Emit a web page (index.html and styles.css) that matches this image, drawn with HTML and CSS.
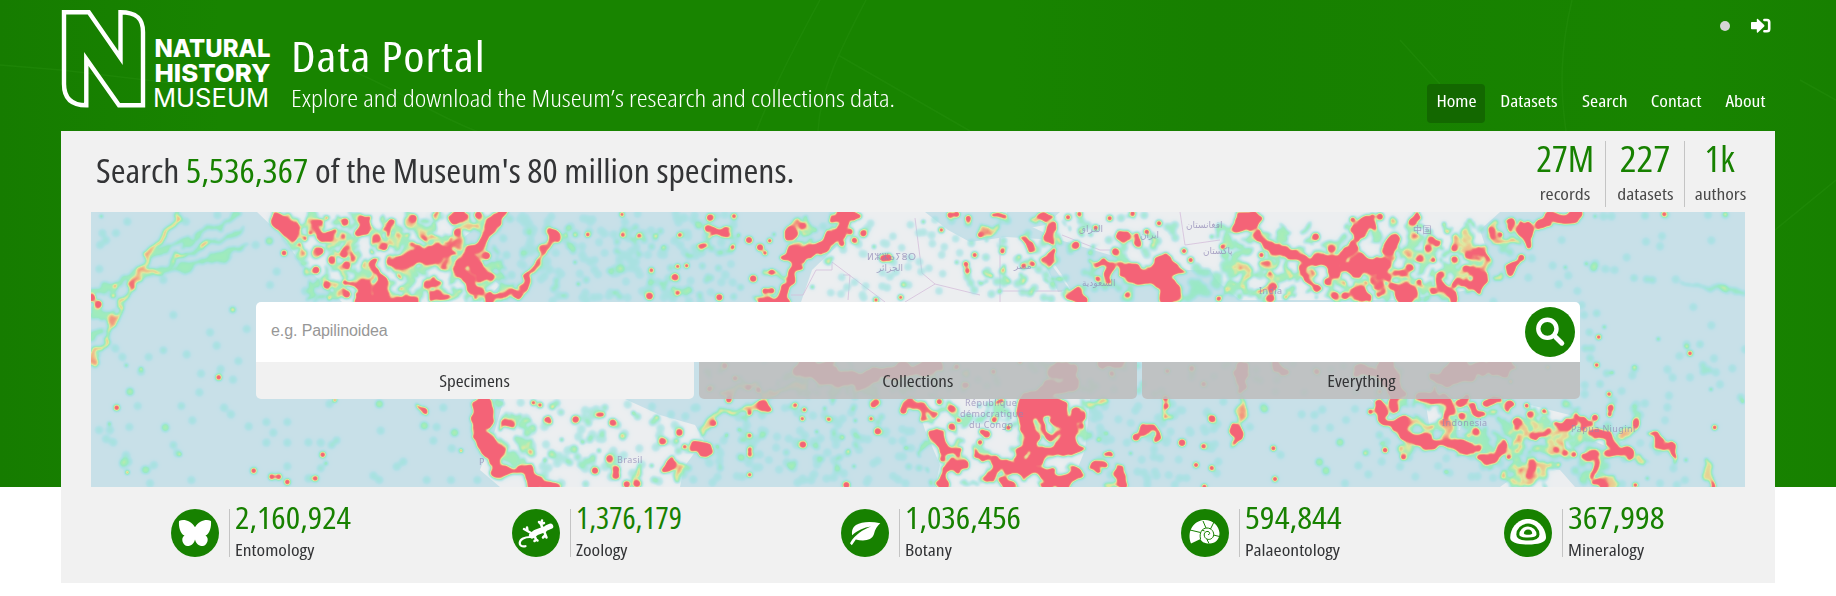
FILE: index.html
```html
<!DOCTYPE html>
<html lang="en">
<head>
<meta charset="utf-8">
<title>Data Portal | Natural History Museum</title>
<link rel="stylesheet" href="styles.css">
</head>
<body>
<div class="page">
  <svg class="leaf" viewBox="0 0 1836 487" preserveAspectRatio="none" aria-hidden="true">
    <path d="M820 0C790 55 750 130 735 200M866 0C840 50 820 90 818 131M838 55L970 131M0 65L61 70L180 84M350 70C400 90 440 120 500 140M1572 0C1560 50 1560 90 1566 131M1400 40L1440 84M1800 80L1836 100M1775 230L1836 180"/>
  </svg>
  <div class="wrap">
    <header class="header">
      <svg class="logo" viewBox="61 8 212 101" role="img" aria-label="Natural History Museum">
        <path class="logo-n" d="M64 12.2H88.8L120.5 58V12.2C136 12.2 143 18 143 32V105.3H119L86.3 59V105.3C71 105.3 64 98 64 84Z"/>
        <g class="logo-text">
          <text x="154.500" y="57.4" textLength="116" lengthAdjust="spacingAndGlyphs">NATURAL</text>
          <text x="154.500" y="82.2" textLength="116" lengthAdjust="spacingAndGlyphs">HISTORY</text>
          <text class="thin" x="153" y="107" textLength="116" lengthAdjust="spacingAndGlyphs">MUSEUM</text>
        </g>
      </svg>
      <div class="titles">
        <h1><span class="fit title">Data Portal</span></h1>
        <p><span class="fit subtitle">Explore and download the Museum’s research and collections data.</span></p>
      </div>
      <div class="header-right">
        <div class="account">
          <i class="status"></i>
          <svg class="signin" viewBox="0 0 20 16"><path fill="#fff" d="M0 4.8Q0 4.1 .8 4.1H5.8V1.5Q5.9.3 6.9.9L13.2 7Q13.8 7.8 13.2 8.5L6.9 14.6Q5.9 15.2 5.8 14V11.3H.8Q0 11.3 0 10.6Z"/><path fill="none" stroke="#fff" stroke-width="2.6" stroke-linecap="round" d="M13.4 2H16Q18.2 2 18.2 4.2V11Q18.2 13.3 16 13.3H13.4"/></svg>
        </div>
        <nav class="nav">
          <a class="on"><span class="fit">Home</span></a>
          <a><span class="fit">Datasets</span></a>
          <a><span class="fit">Search</span></a>
          <a><span class="fit">Contact</span></a>
          <a><span class="fit">About</span></a>
        </nav>
      </div>
    </header>
    <main class="card">
      <section class="top">
        <h2><span class="fit hero">Search <b>5,536,367</b> of the Museum's 80 million specimens.</span></h2>
        <div class="stats">
          <div><strong><span class="fit">27M</span></strong><span class="fit">records</span></div>
          <div><strong><span class="fit wide">227</span></strong><span class="fit">datasets</span></div>
          <div><strong><span class="fit">1k</span></strong><span class="fit">authors</span></div>
        </div>
      </section>
      <section class="map">
        <svg class="mapart" viewBox="91 212 1654 275" aria-hidden="true">
          <defs>
            <filter id="coast" filterUnits="userSpaceOnUse" x="70" y="190" width="1700" height="320">
              <feTurbulence type="fractalNoise" baseFrequency=".07" numOctaves="2" seed="7" result="noise"/>
              <feDisplacementMap in="SourceGraphic" in2="noise" scale="17" xChannelSelector="R" yChannelSelector="G"/>
            </filter>
            <filter id="heat" filterUnits="userSpaceOnUse" x="70" y="190" width="1700" height="320" color-interpolation-filters="sRGB">
              <feGaussianBlur in="SourceGraphic" stdDeviation="1.5" result="near"/>
              <feGaussianBlur in="SourceGraphic" stdDeviation="3.6" result="wide"/>
              <feComponentTransfer in="wide" result="halo"><feFuncA type="linear" slope=".5"/></feComponentTransfer>
              <feComposite in="near" in2="halo" operator="over"/>
              <feColorMatrix values="0 0 0 1 0  0 0 0 1 0  0 0 0 1 0  0 0 0 1 0"/>
              <feComponentTransfer>
                <feFuncR type="table" tableValues=".60 .60 .61 .61 .57 .62 .88 .94 .95 .96 .96"/>
                <feFuncG type="table" tableValues=".87 .87 .88 .89 .92 .93 .91 .74 .48 .39 .39"/>
                <feFuncB type="table" tableValues=".90 .90 .90 .87 .75 .70 .62 .54 .47 .47 .47"/>
                <feFuncA type="table" tableValues="0 .12 .45 .7 .85 .9 .97 1 1 1 1"/>
              </feComponentTransfer>
            </filter>
          </defs>
          <rect x="91" y="212" width="1654" height="275" fill="#c8e0e8"/>
          <g class="land">
            <path d="M257 212L282 236L300 262L330 290L345 305H480L500 285L480 270L450 250L478 225L500 212Z"/>
            <path d="M504 399L495 430L480 470L500 487H680L684 467L704 440L695 425L660 415L625 399Z"/>
            <path d="M858 212L838 245L812 270L800 305H1080L1062 275L1048 255L1056 240L1006 237L970 242L948 230L925 212Z"/>
            <path d="M915 399L925 430L940 465L935 487H1070L1085 450L1090 399Z"/>
            <path d="M1000 212L1060 240L1110 255L1150 270H1210L1230 300H1400L1470 290L1490 260L1480 230L1500 212Z"/>
            <path d="M1425 399H1465L1460 430H1430ZM1530 405L1570 415L1625 440L1610 448L1580 435L1572 450L1540 425ZM1500 487L1530 465L1560 470L1575 487ZM1370 399L1400 425L1395 432Z"/>
          </g>
          <path class="sea" d="M1007 212H1060L1045 225L1008 232ZM1048 260L1070 290L1058 292L1046 266ZM1180 276L1206 272L1240 300H1175Z"/>
          <path class="border" d="M832 262V270H816L803 295L791 295M832 262L885 302M843 275H850L848 300M905 302L935 284L922 273L915 218M935 284L980 295M1000 238V302M1000 291H1062M1062 235L1100 250H1115M1180 212L1185 245L1220 240"/>
          <g filter="url(#heat)"><g id="spots"></g><g id="bands" filter="url(#coast)"></g></g>
          <g class="names">
            <text x="867" y="260">ⵍⵣⵣⴰⵢⴻⵔ</text><text x="877" y="271">الجزائر</text>
            <text x="1014" y="269">مصر</text>
            <text x="1079" y="232">العراق</text><text x="1140" y="238">ايران</text>
            <text x="1186" y="228">افغانستان</text><text x="1203" y="254">پاکستان</text>
            <text x="1082" y="286">السعودية</text><text x="1259" y="294">India</text>
            <text x="1413" y="233">中国</text><text x="617" y="463">Brasil</text>
            <text x="965" y="406">République</text><text x="960" y="417">démocratique</text><text x="969" y="428">du Congo</text>
            <text x="1442" y="426">Indonesia</text><text x="1571" y="432">Papua Niugini</text><text x="479" y="465">P</text>
          </g>
        </svg>
        <form class="search">
          <div class="field">
            <span class="hint">e.g. Papilinoidea</span>
            <span class="go"><svg viewBox="0 0 50 50"><circle cx="22.4" cy="21.8" r="9.1"/><path d="M29 28.5L31 30.5" stroke-width="4"/><path d="M31 30.5L36.8 36.2" stroke-width="5"/></svg></span>
          </div>
          <div class="tabs">
            <div class="active"><span class="fit">Specimens</span></div>
            <div><span class="fit">Collections</span></div>
            <div><span class="fit">Everything</span></div>
          </div>
        </form>
      </section>
      <section class="counts">
        <div class="count ento">
          <svg viewBox="0 0 48 48"><circle cx="24" cy="24" r="24"/><path fill="#fff" d="M24 18.2C20 12 13 9.5 8 12C7.500 17 9 25 13.500 26.500C9 29 12 37 16.500 37C20.500 37 23 34.500 24 30.500C25 34.500 27.500 37 31.500 37C36 37 39 29 34.500 26.500C39 25 40.500 17 40 12C35 9.500 28 12 24 18.200Z"/></svg>
          <div><strong><span class="fit">2,160,924</span></strong><span class="fit">Entomology</span></div>
        </div>
        <div class="count zoo">
          <svg viewBox="0 0 48 48"><circle cx="24" cy="24" r="24"/><g fill="none" stroke="#fff" stroke-linecap="round" stroke-linejoin="round"><path stroke-width="6" d="M20 26.500L24 23.500L32 20.500"/><path stroke-width="5.500" d="M35 18.800L38.500 17.300"/><path stroke-width="2.200" d="M18 28C13 28 8 30 7.700 34C7.500 36.500 10 38 13.500 37.200"/><path stroke-width="2.500" d="M19 24L15.500 22L15 18.500M12 20L15.500 22M23 28L24 30.500L22.500 32M25.500 31.500L24 30.500M30 18L29 15L30 11.500M27 13L29 15L32 14M32 22L33.500 26L31 28.500M34.500 28.500L33.500 26"/></g></svg>
          <div><strong><span class="fit">1,376,179</span></strong><span class="fit">Zoology</span></div>
        </div>
        <div class="count bot">
          <svg viewBox="0 0 48 48"><circle cx="24" cy="24" r="24"/><path fill="#fff" d="M39.300 14.200C30 12 20.500 12.500 15 16C11.500 18.500 10.500 22 11.200 26.300C16 21.500 23 18.500 30 17.500C22 20.500 14 25.500 9 34.200L10.800 36.200L14.800 30.500C23 32.500 31 31.500 33 25C34 20.500 36 17 39.300 14.200Z"/></svg>
          <div><strong><span class="fit">1,036,456</span></strong><span class="fit">Botany</span></div>
        </div>
        <div class="count pal">
          <svg viewBox="0 0 48 48"><circle cx="24" cy="24" r="24"/><path fill="#fff" d="M10 34.500C6 24 11 13.500 21 11.300C30 9.500 38 16 38.500 24C38.500 31 33.500 35 28 34.500C24 34.500 20.500 33 19.500 30Z"/><path fill="none" stroke="#178100" stroke-width="1" d="M19.500 30C18 24 21 19 26 19C30.500 19 33.500 23 32.500 27C31 31 26 31.500 24 28.500C22 25 24 22 27 22.500C29.500 23 29 26 27 25.500M9 21L19.500 23.500M22 12L25 19M33 13L29.500 20M38.500 27.500L32.500 26M26 30.500L28 34.500M23.500 22L21 21"/></svg>
          <div><strong><span class="fit">594,844</span></strong><span class="fit">Palaeontology</span></div>
        </div>
        <div class="count min">
          <svg viewBox="0 0 48 48"><circle cx="24" cy="24" r="24"/><path fill="#fff" d="M24 10C13 10 6 20 6.200 29C6.500 33.500 14 35.500 24 35.500C34 35.500 41.500 33.500 42 29C42 20 35 10 24 10Z"/><path fill="none" stroke="#178100" stroke-width="3" d="M24 16C18 16 13.800 21 13.800 25.500C13.800 28.500 18 30 24 30C30 30 34 28.500 34 25.500C34 21 30 16 24 16Z"/><path d="M24 20.500C21 20.500 19.700 23 19.900 24.500C20.500 26.200 27.500 26.200 28.200 24.500C28.300 22.500 27 20.500 24 20.500Z"/></svg>
          <div><strong><span class="fit">367,998</span></strong><span class="fit">Mineralogy</span></div>
        </div>
      </section>
    </main>
  </div>
</div>
<script src="script.js"></script>
</body>
</html>
```
FILE: styles.css
```css
*{box-sizing:border-box}
body{margin:0;background:#fff;color:#333436;font-family:"Open Sans","Noto Sans",sans-serif;font-stretch:75%}
.page{height:596px;background:linear-gradient(90deg,#167c00,#188400 12%,#188400 55%,#177f00 66%,#188400 92%,#178000) no-repeat;background-size:100% 487px;position:relative;overflow:hidden}
.leaf{position:absolute;top:0;left:0;width:100%;height:487px}
.leaf path{fill:none;stroke:#2b9212;stroke-width:1.5;opacity:.35}
.wrap{width:1714px;margin:0 auto;position:relative}
.fit{display:inline-block;white-space:nowrap;transform:scaleX(1.15)}
h1,h2,p{margin:0;font-weight:400}
.header{height:131px;display:flex;color:#fff}
.logo{width:212px;height:101px;margin-top:8px;flex:none;overflow:visible}
.logo-n{fill:none;stroke:#fff;stroke-width:4.4;stroke-miterlimit:10}
.logo-text{fill:#fff;font:800 25px Inter,sans-serif}
.logo-text .thin{font-weight:400}
.titles{padding:27px 0 0 18px;flex:1}
h1{font-size:42px;line-height:57px;height:57px}
.title{letter-spacing:.8px;transform:scaleX(1.15);transform-origin:0 50%}
.titles p{font-size:24px;line-height:32px;margin-top:-2px;font-weight:300}
.subtitle{transform:scaleX(1.147);transform-origin:0 50%}
.header-right{display:flex;flex-direction:column;align-items:flex-end}
.account{height:84px;display:flex;align-items:flex-start;gap:21px;padding:18px 4px 0 0}
.status{width:10px;height:10px;border-radius:50%;background:#d5d5d5;margin-top:3px}
.signin{width:20px;height:16px}
.nav{display:grid;grid-template-columns:58px 80px 64px 70px 60px;gap:4px;font-size:17px;text-align:center}
.nav a{height:39px;line-height:34px;border-radius:4px}
.nav .on{background:#136800}
.card{height:452px;background:#f1f1f1;padding:0 30px}
.top{height:81px;display:flex;justify-content:space-between;padding-left:5px}
h2{font-size:32px;line-height:79px}
.hero{transform:scaleX(1.118);transform-origin:0 50%}
h2 b,strong{color:#178100;font-weight:400}
.stats{display:flex;padding-top:10px;height:76px}
.stats div{border-left:1px solid #c4c4c4;display:flex;flex-direction:column;align-items:center;width:79px;font-size:17px;line-height:22px;color:#4a4a4a}
.stats div:first-child{border:0}
.stats div:last-child{width:61px;padding-left:10px}
.stats strong{font-size:36px;line-height:35px;height:42px}
.stats strong .fit{transform:scaleX(1.03)}
.stats strong .wide{transform:scaleX(1.1)}
.map{height:275px;position:relative;overflow:hidden}
.mapart{position:absolute;left:0;top:0;width:1654px;height:275px}
.land{fill:#eceef0}
.sea{fill:#c8e0e8}
.border{fill:none;stroke:#d6bedb;stroke-width:.8}
.names{font:9px "Noto Sans","DejaVu Sans","Noto Sans CJK SC",sans-serif;fill:#8f86b4;opacity:.7;letter-spacing:.4px}
.search{position:relative;width:1324px;margin:90px auto 0}
.field{height:60px;background:#fff;border-radius:5px 5px 0 0;display:flex;justify-content:space-between;align-items:center;padding:0 5px 0 15px}
.hint{font:16px "Liberation Sans",Arial,sans-serif;color:#979797;margin-top:-3px;letter-spacing:-.1px}
.go{width:50px;height:50px;border-radius:50%;background:#178100}
.go svg{display:block;fill:none;stroke:#fff;stroke-width:4.4;stroke-linecap:round}
.tabs{display:grid;grid-template-columns:repeat(3,438px);gap:5px}
.tabs div{height:37px;border-radius:0 0 5px 5px;background:rgba(190,190,190,.87);text-align:center;font-size:17px;line-height:37px}
.tabs .fit{transform:scaleX(1.12)}
.tabs .active{background:#f1f1f1}
.counts{position:relative;height:96px;display:flex;padding:22px 0 0 80px}
.count{display:flex;height:48px;width:341px}
.zoo{width:329px}.bot{width:340px}.pal{width:323px}.min{width:200px}
.count svg{width:48px;height:48px;fill:#178100;margin-right:10px}
.count>div{border-left:1px solid #c4c4c4;padding-left:5px;display:flex;flex-direction:column;align-items:flex-start;font-size:17px;line-height:22px}
.count .fit{transform-origin:0 50%}
.count strong{font-size:31px;line-height:30px;margin-top:-7px;height:37px;flex:none}
.count strong .fit{transform:scaleX(1.095)}
.zoo strong .fit{transform:none}
.pal strong .fit,.min strong .fit{transform:scaleX(1.125)}
```
FILE: script.js
```js
// Broad bands are kept apart from single spots so that only they get ragged edges.
var NS = 'http://www.w3.org/2000/svg';
var spots, bands;

function stroke(weight, width, d, target) {
  var p = document.createElementNS(NS, 'path');
  p.setAttribute('d', d);
  p.setAttribute('fill', 'none');
  p.setAttribute('stroke', '#000');
  p.setAttribute('stroke-width', width);
  p.setAttribute('stroke-linecap', 'round');
  p.setAttribute('stroke-linejoin', 'round');
  p.setAttribute('stroke-opacity', weight);
  (target || bands).appendChild(p);
}
function dots(weight, width, list) {
  var n = list.split(' '), d = '';
  for (var i = 0; i < n.length; i += 2) d += 'M' + n[i] + ' ' + n[i + 1] + 'h.1';
  stroke(weight, width, d, spots);
}
function layer(id, x) {
  var g = document.createElementNS(NS, 'g');
  g.setAttribute('transform', 'translate(' + x + ' 205) scale(.33333)');
  document.getElementById(id).appendChild(g);
  return g;
}
function begin(x) {
  spots = layer('spots', x);
  bands = layer('bands', x);
}
var seed = 41;
function rnd() { seed = (seed * 16807) % 2147483647; return seed / 2147483647; }
function scatter(weight, width, n, x, y, w, h, skew) {
  var d = '';
  for (var i = 0; i < n; i++) {
    var v = rnd();
    d += 'M' + (x + rnd() * w + v * (skew || 0)).toFixed(0) + ' ' + (y + v * h).toFixed(0) + 'h.1';
  }
  stroke(weight, width, d, weight > .32 ? bands : spots);
}

// Pacific and the Americas
begin(80);
scatter(.4, 26, 120, 570, 25, 620, 260, 120);
scatter(.34, 24, 80, 600, 25, 620, 260, 100);
scatter(.55, 14, 80, 600, 30, 620, 250, 100);
scatter(.9, 15, 34, 620, 30, 540, 240, 80);
stroke(.36, 20, 'M300 25L250 95L185 185L105 243L35 262M185 185L140 265L95 355L85 400L35 470M190 195L240 205M240 185L310 150L375 122L435 95L490 72M215 150L280 125L380 75L480 32M185 205L320 190L410 155L500 130M35 320L90 330M35 400L60 380');
stroke(.48, 11, 'M300 25L250 95L190 175M185 185L140 265L95 355L85 400L35 470M190 195L240 205M285 165L312 150M360 125L380 122');
dots(.25, 26, '142 50 67 84 108 84 60 120 78 106 58 192 98 270 280 330 390 382 410 422 475 468 320 448 206 456 127 456 106 430 363 506 422 492 459 524 358 562 150 560 173 603 432 608 453 628 337 646 148 666 57 675 90 675 78 702 100 712 256 670 138 750 130 778 222 780 193 794 334 825 506 664 559 651 622 651 580 683 559 713 622 713 685 712 722 713 622 784 685 820 570 240 590 200 675 258 527 120 568 108 898 597 902 677 1030 662 1070 666 1060 707 970 770 950 785 880 812 898 825 1040 825 1113 825 1192 825 1122 683 1115 730 500 372 748 597 210 835 250 225 135 775 145 770 318 50 412 30 1280 150 1295 210 1330 150 1340 80 1270 100 1250 70 1090 608');
dots(.28, 24, '183 500 250 436 304 603 256 665 280 720 292 745 755 720 770 706 722 790 458 314 130 770 200 795 898 597 150 560 1035 662 1125 683 1290 42 568 108');
dots(.6, 13, '183 491 139 481 88 656 300 748 738 775 458 314 100 272 105 243 64 34 748 280');
dots(1, 19, '110 608 416 517 521 797 575 815 596 815 706 820 728 749 622 831 612 144');
dots(1, 13, '142 802 765 585 765 76 658 118 638 105 1143 737 690 85 1186 278 790 93');
dots(1, 24, '55 298 35 278');
stroke(.5, 20, 'M185 215L150 245');
stroke(1, 42, 'M592 50L640 72');
stroke(1, 28, 'M710 48L725 42M720 75L738 98M840 48L862 48M850 50V85M1110 35L1155 28M1060 275h25M895 285L1000 288');
dots(1, 24, '795 50 792 148 720 138 755 165 890 100 912 125 1000 40 1132 82 1195 30 740 240 800 268 1220 152 1232 215 708 195 800 180');
stroke(1, 34, 'M945 172L1010 158L1112 135M1255 30L1235 70L1200 110L1160 150L1140 200L1165 235L1200 265');
stroke(1, 42, 'M1160 150L1200 200M850 235L860 285M900 235L925 285M845 285L930 290');
stroke(1, 20, 'M892 170L885 200L905 235M790 225L815 235M1225 285L1260 265L1315 268M930 80L937 50M1340 240L1349 210M1040 240L1075 238');
stroke(1, 50, 'M1215 600L1205 650M1220 710L1235 740');
stroke(1, 34, 'M1200 590L1195 650L1200 690L1230 750L1245 770M1260 735L1240 775');
stroke(1, 24, 'M1255 795L1349 803M1015 604L1038 614M1265 660L1300 655');
scatter(.38, 24, 24, 1250, 590, 100, 240);
scatter(.4, 20, 20, 920, 165, 200, 110);
scatter(.4, 18, 10, 1150, 620, 50, 100, 60);

// Atlantic
begin(520);
scatter(.22, 26, 150, 0, 25, 650, 265);
scatter(.3, 22, 45, 100, 60, 580, 220);
scatter(.24, 24, 50, 890, 40, 450, 240);
scatter(.22, 26, 90, 560, 600, 620, 235);
scatter(.24, 26, 70, 0, 590, 540, 250);
scatter(.32, 22, 28, 10, 590, 500, 250);
scatter(.3, 22, 24, 600, 590, 600, 220);
dots(.6, 13, '165 90 137 90 165 172 175 237 430 127 408 92 460 250 762 88 656 90 877 246 1062 125 1150 240 340 624 97 606 305 692 125 704 188 711 75 765 30 740 237 737 470 707 592 724 620 690 657 674 914 610 890 680 968 697 985 738 1157 729 1002 784 1006 647 395 782 410 637 1210 50 1310 172');
dots(1, 16, '203 89 308 90 357 92 479 90 638 126 749 107 394 195 473 184 500 182 473 264 735 144 306 28 642 33 1068 285 1142 277 847 641 853 614 826 600 926 643 1053 641 689 691 689 733 689 748 689 809 689 624 1337 176 1342 196 60 600 40 593 494 725 1316 646 1264 75');
dots(1, 23, '570 38 564 70 687 105 720 127 465 216 389 274 598 277 699 221 700 221 427 709 478 683 225 797 167 643 278 653 849 719 1073 679 979 840 1295 611 1295 665 288 793 288 812 320 838 350 836 268 761 1150 617 1105 158 1090 160 1030 85');
stroke(1, 32, 'M95 90L108 95M590 76L618 82M815 75L817 98M945 35L1005 35M730 290L805 292');
stroke(.85, 17, 'M90 100L60 155L35 200L0 265');
stroke(1, 26, 'M980 40L965 90L915 112L880 140L805 155L830 180L810 230L795 280M910 90L925 125M545 130L556 125M78 650L95 646M235 630L245 635M437 800L442 785L458 765');
stroke(1, 34, 'M900 125L850 150L805 155M800 250L780 290');
dots(1, 20, '848 62 990 80 1003 106 965 115 755 202 735 258 755 257 581 655 1268 762 1337 776 1290 30 1310 28 1345 40 626 585 1068 592 1060 600 1258 590');
stroke(.55, 18, 'M740 200L800 215L815 220M830 125L880 135M705 280L740 268M540 680L595 620L690 605L740 600M475 790L476 825M355 790L350 815M820 50L855 80');
stroke(1, 30, 'M520 725L550 720L553 745M728 602L742 610M1238 685L1252 680L1270 735L1310 742M1320 780L1280 800L1270 835M0 795L30 790M30 825L110 845M30 820L40 850');
stroke(.85, 26, 'M1165 590L1200 605L1210 645M1215 600L1240 620');
stroke(1, 44, 'M840 485L940 520L1020 525L1100 500L1200 495L1250 480M850 470L920 490');
dots(1, 18, '645 520 685 548 715 555 568 552 615 482 1310 485 1335 540');
stroke(.5, 18, 'M740 575L850 535M620 560L700 540');
scatter(.34, 24, 50, 560, 475, 780, 100);
scatter(.44, 20, 20, 1200, 590, 145, 240);
scatter(.44, 20, 16, 800, 40, 160, 130);

// Africa, the Middle East and South Asia
begin(960);
scatter(.3, 24, 85, 20, 30, 640, 255);
scatter(.4, 24, 100, 760, 60, 600, 225, 30);
scatter(.55, 14, 46, 60, 40, 520, 240);
scatter(.6, 14, 44, 900, 150, 440, 130);
scatter(.9, 15, 16, 900, 180, 440, 100);
scatter(.3, 28, 45, 650, 170, 300, 120);
scatter(.36, 24, 60, 0, 590, 390, 250);
scatter(.22, 26, 60, 400, 590, 380, 250);
dots(.24, 26, '790 590 850 610 915 612 1025 628 1063 630 1087 614 1110 668 1065 670 1158 645 1185 612 1140 712 1155 835 1078 772 1098 800 1195 782 1225 808 1265 770 962 750 870 666 775 770 910 605 1320 730');
dots(.28, 24, '912 612 1140 712 1078 770 1098 795 845 635 1220 742 1258 690');
dots(.6, 13, '25 50 120 258 178 155 94 212 128 197 755 95 840 190 755 788 440 685 415 705 512 745 825 715 615 635 1265 716 1215 745 118 260');
dots(1, 18, '60 90 127 139 44 150 18 178 22 197 218 177 190 183 407 68 449 40 518 25 597 55 560 80 324 37 358 27 672 138 692 165 788 125 730 724 940 730 708 780 618 604 528 697 1276 736 1330 756 1231 620 60 712 102 645 145 668 502 269 413 221 364 662 733 845 904 150 1178 44 103 645 945 822 66 680 755 789 776 281 1330 206');
dots(1, 24, '1067 95 756 641 666 713 940 245 1070 250 1027 190 210 120 528 697 80 688 1103 230 1125 272 1155 272 1114 132 1200 272 348 120 466 140 930 280');
stroke(1, 32, 'M240 40L258 32M275 70L270 105M325 272L350 268L375 290M1215 50L1250 60M1200 75L1190 95M1295 110L1280 130M825 668L830 690M478 800L488 835');
stroke(1, 24, 'M105 32L130 36M260 170L268 140M200 110L220 130M410 180L440 175M448 190V220M528 95L535 125M490 85L500 90M548 672L580 665L588 700M400 780L420 790M435 740L450 748M1155 145L1180 125L1140 165M830 30L885 30M1245 30L1230 60M1300 240L1320 270');
stroke(.55, 20, 'M65 80L110 70M190 105L225 120M400 180L490 180M845 575L845 650M830 700L820 720M615 570L616 635M980 190L990 215M1255 230L1265 260M390 595L430 590M435 845L475 835');
stroke(1, 42, 'M505 200L560 220L630 240L625 285M590 180L610 165L650 190M1200 160L1230 190L1270 180M840 60L885 50M1335 280L1349 260');
stroke(1, 50, 'M590 195L620 200');
stroke(1, 32, 'M895 90L930 130L980 140L1040 168L1130 165M1120 170V205M1160 190L1200 210M1180 260L1220 280');
stroke(1, 22, 'M1030 215L1070 250M1150 190L1180 175M1240 180L1290 215M480 185L520 205M655 190L665 200');
stroke(1, 50, 'M210 590L215 630L260 600L300 600L300 640M335 660L310 720M300 640L335 670');
stroke(1, 33, 'M190 620L205 690L240 760M350 625L340 690L350 740L290 725L230 760L180 790L110 770L95 820M200 720L180 760L250 810L310 840M190 805L270 800L260 840M350 790L345 820L300 830M140 820L150 850');
stroke(1, 20, 'M370 620L345 670M50 745L80 765M0 780L12 785M240 640L260 690L285 690M115 590L130 590');
stroke(1, 36, 'M280 500L340 500L330 540L270 550L220 575M430 475L480 475M950 480L965 500M1200 490L1250 510L1320 560M845 490V540');
dots(1, 17, '694 490 622 498 730 537 1070 500 615 580 100 500 20 540 180 470 455 505');
scatter(.3, 24, 60, 0, 475, 1340, 100);
stroke(1, 30, 'M1260 605L1270 640L1320 660L1345 695M1300 580L1305 600');

// East Asia and Oceania
begin(1380);
scatter(.4, 24, 75, 0, 50, 280, 230);
scatter(.6, 14, 32, 10, 30, 300, 240);
scatter(.3, 26, 30, 250, 60, 180, 140, -60);
scatter(.34, 26, 95, 40, 590, 550, 150);
scatter(.3, 28, 60, 390, 640, 300, 190);
scatter(.5, 14, 34, 60, 600, 500, 200);
scatter(.22, 26, 26, 60, 700, 400, 140);
scatter(.22, 26, 14, 600, 590, 260, 250);
dots(.24, 26, '695 34 858 30 984 30 1036 30 846 93 840 124 798 110 740 157 518 182 565 212 676 192 704 195 640 190 646 175 536 238 592 258 445 218 456 160 940 306 994 106 994 361 1002 460 1057 490 862 493 878 518 930 517 898 453 757 512 1020 538 867 572 862 607 700 587 760 610 1008 502 1095 433 612 330 605 300 614 540 614 568 725 558 765 490 545 105 670 34 795 595 1030 250 887 223 340 290 920 418 780 630 880 790 915 825 840 835 890 840 345 750 310 785 60 785 20 710');
dots(.28, 24, '762 219 800 223 818 225 650 325 628 382 615 430 635 430 630 460 680 505 660 537 960 418 968 480 985 495 970 500 795 32 642 185 565 600 1082 577');
stroke(.32, 18, 'M910 235L960 242L1005 248L1060 255L1095 260');
dots(.6, 13, '556 187 619 176 835 402 920 425 763 487 993 553 697 503 673 366 802 820 645 34 1036 28 197 800 535 778 979 765 918 765 885 770 1088 590 192 57');
dots(1, 17, '656 396 930 445 687 567 1004 667 650 480 852 27 70 757 14 735 386 756 528 733 556 744 582 749 361 89 689 628 766 840 68 205 118 230 160 165 197 635 286 141 492 618 440 602');
dots(1, 22, '692 609 645 638 119 161 144 130 170 115 155 105 266 150 258 190 275 195 223 130 223 163 181 210 90 187 424 158 294 730 38 245 160 258 768 658 768 650 450 628 288 680 245 633 0 35');
stroke(1, 34, 'M480 55L520 40L590 35M430 70L445 80L445 115M40 115L22 125M75 245L70 280M0 200L5 210M180 240L215 265L220 285M300 210L295 250L265 240M195 590L205 615M245 600L250 580');
stroke(1, 26, 'M118 32L108 50M375 50L385 65M390 195L408 184M55 285H90M70 690L100 705L190 715L280 730M300 760L345 757L375 720M645 685L690 690L700 740L745 745M540 655L570 660M285 610L305 625M200 720L260 735M820 693L850 715M875 720L890 745M615 757L645 745M640 775V800M660 820L675 845M5 600L20 645L60 655M390 600V615M400 650L415 660M330 585H360M130 580H160');
stroke(.55, 22, 'M320 130L330 165L310 190M335 60L345 90M355 110L405 102M200 650L200 700M40 650L95 690M340 220L360 215M770 763L795 770M375 800L370 820M440 770L470 785M815 695L880 735M985 770L985 810L1000 840M430 665L440 680M680 820L700 840M85 650L150 670M735 685L760 670');
stroke(1, 22, 'M452 775L454 800M470 685L500 685M600 655L635 652M590 640L605 675M340 85L345 90M225 230L280 235M1000 838L1005 850M300 140L325 150');
scatter(.38, 22, 16, 380, 770, 120, 70);
stroke(1, 46, 'M170 520L240 510L310 490M20 480L50 560M350 480L375 490M130 575H160M210 500L240 480');
dots(1, 13, '503 487 392 530 0 560');
```
